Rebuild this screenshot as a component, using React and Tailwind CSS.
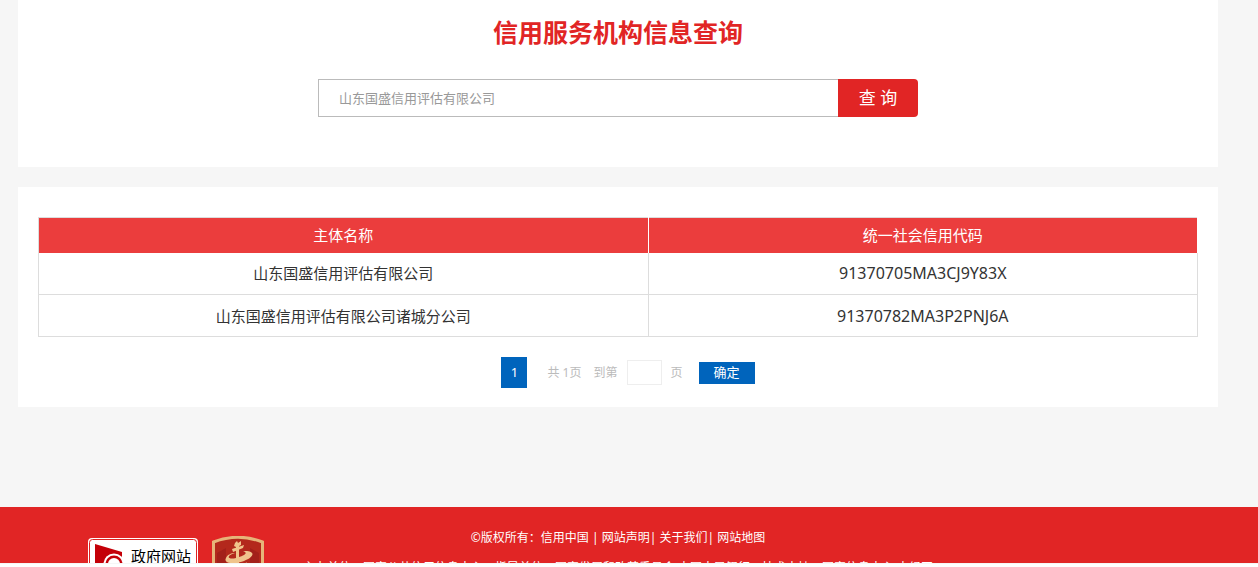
import { useState } from "react"

const results = [
  { name: "山东国盛信用评估有限公司", code: "91370705MA3CJ9Y83X" },
  { name: "山东国盛信用评估有限公司诸城分公司", code: "91370782MA3P2PNJ6A" },
]

function SearchPanel() {
  const [keyword, setKeyword] = useState("")

  return (
    <section className="bg-white pt-3 pb-[50px]">
      <h1 className="text-center text-[25px] leading-10 font-bold text-[#e12525]">信用服务机构信息查询</h1>
      <form className="mx-auto mt-[27px] flex max-w-[600px]" onSubmit={(e) => e.preventDefault()}>
        <input
          type="text"
          aria-label="机构名称"
          placeholder="山东国盛信用评估有限公司"
          value={keyword}
          onChange={(e) => setKeyword(e.target.value)}
          className="h-[38px] min-w-0 flex-1 border border-r-0 border-[#bbb] px-5 text-[13px] text-[#333] outline-none placeholder:text-[#999]"
        />
        <button type="submit" className="h-[38px] w-20 rounded-r bg-[#e12525] text-[17px] text-white">
          查 询
        </button>
      </form>
    </section>
  )
}

function Pagination() {
  const [page, setPage] = useState("")

  return (
    <form className="mt-5 flex items-center justify-center pl-5 text-xs text-[#bbb]" onSubmit={(e) => e.preventDefault()}>
      <button type="button" className="h-[31px] w-[26px] bg-[#0064bc] text-[13px] text-white">
        1
      </button>
      <span className="ml-5">共 1页</span>
      <label htmlFor="page" className="ml-3">
        到第
      </label>
      <input
        id="page"
        type="text"
        value={page}
        onChange={(e) => setPage(e.target.value)}
        className="ml-[10px] h-[25px] w-[35px] border border-[#eee] text-center outline-none"
      />
      <span className="ml-2">页</span>
      <button type="submit" className="ml-4 h-[22px] w-14 bg-[#0064bc] text-[13px] text-white">
        确定
      </button>
    </form>
  )
}

function ResultPanel() {
  return (
    <section className="mt-5 bg-white px-5 pt-[30px] pb-[19px]">
      <table className="w-full table-fixed border-collapse border border-[#ddd] text-center text-[15px] leading-6 text-[#333]">
        <colgroup>
          <col className="w-[52.6%]" />
          <col />
        </colgroup>
        <thead>
          <tr className="h-[35px] bg-[#eb3d3d] text-white">
            <th className="border-r border-white font-normal">主体名称</th>
            <th className="border-r border-white font-normal">统一社会信用代码</th>
          </tr>
        </thead>
        <tbody>
          {results.map((item) => (
            <tr key={item.code} className="h-[42px] not-last:border-b not-last:border-[#ddd]">
              <td className="border-r border-[#ddd]">{item.name}</td>
              <td className="text-base">{item.code}</td>
            </tr>
          ))}
        </tbody>
      </table>
      <Pagination />
    </section>
  )
}

function GovSiteBadge() {
  return (
    <svg width="110" height="54" viewBox="0 0 110 54" role="img" aria-label="政府网站找错">
      <rect width="110" height="54" rx="4" fill="#fff" />
      <rect x="1.5" y="1.5" width="107" height="51" rx="3" fill="none" stroke="#d22" />
      <path d="M7 6 L34 14 V38 L7 48 Z" fill="#c40008" />
      <circle cx="26" cy="26" r="10.5" fill="#fff" />
      <circle cx="26" cy="26" r="8.5" fill="#c40008" />
      <circle cx="26" cy="26" r="6" fill="#fff" />
      <path d="M33 34 L41 43" stroke="#c40008" strokeWidth="4" />
      <text x="43" y="24" fontSize="15" fill="#000">
        政府网站
      </text>
      <text x="58" y="44" fontSize="15" fill="#000">
        找错
      </text>
    </svg>
  )
}

function PartyOrgBadge() {
  return (
    <svg width="52" height="62" viewBox="0 0 52 62" role="img" aria-label="党政机关">
      <path d="M1.5 6 Q26 -3.5 50.5 6 V38 Q48 53 26 60 Q4 53 1.5 38 Z" fill="#b3281c" stroke="#e6b479" strokeWidth="3" />
      <path d="M5 17 L14 12 V50 L5 39 Z M38 12 L47 17 V39 L38 50 Z" fill="#a3201a" />
      <path d="M23 7 L25 5 L26 7 L29 5 L29 9 L27 10 V27 H24 V11 L22 10 Z" fill="#f0c48c" />
      <path d="M20 13 L32 9 L31 12 L21 16 Z" fill="#f0c48c" />
      <path d="M23 17 C13 20 16 24 24 22 C32 20 37 17 31 15 C44 14 43 21 32 25 C21 29 11 27 14 22 C15 19 19 17 23 17 Z" fill="#f0c48c" />
      <path d="M19 28 Q27 32 35 26 L32 32 H21 Z" fill="#e6b479" />
    </svg>
  )
}

function Footer() {
  return (
    <footer className="h-[57px] overflow-hidden border-b border-[#f6f6f6] bg-[#e12525] pr-[22px] text-xs text-white">
      <div className="mx-auto grid max-w-[1200px] grid-cols-[1fr_auto_1fr]">
        <div className="flex items-start gap-[14px] pt-[29px] pl-[70px]">
          <div className="pt-[2px]">
            <GovSiteBadge />
          </div>
          <PartyOrgBadge />
        </div>
        <div className="pt-4 text-center leading-[30px] whitespace-nowrap">
          <p>
            ©版权所有：信用中国 | <a href="#statement">网站声明</a>| <a href="#about">关于我们</a>|{" "}
            <a href="#map">网站地图</a>
          </p>
          <p>主办单位：国家公共信用信息中心&emsp;指导单位：国家发展和改革委员会 中国人民银行&emsp;技术支持：国家信息中心 中经网</p>
        </div>
      </div>
    </footer>
  )
}

export default function App() {
  return (
    <div className="font-['Noto_Sans','Noto_Sans_CJK_SC',sans-serif]">
      <main className="bg-[#f6f6f6] pr-[22px] pb-[100px]">
        <div className="mx-auto max-w-[1200px]">
          <SearchPanel />
          <ResultPanel />
        </div>
      </main>
      <Footer />
    </div>
  )
}
